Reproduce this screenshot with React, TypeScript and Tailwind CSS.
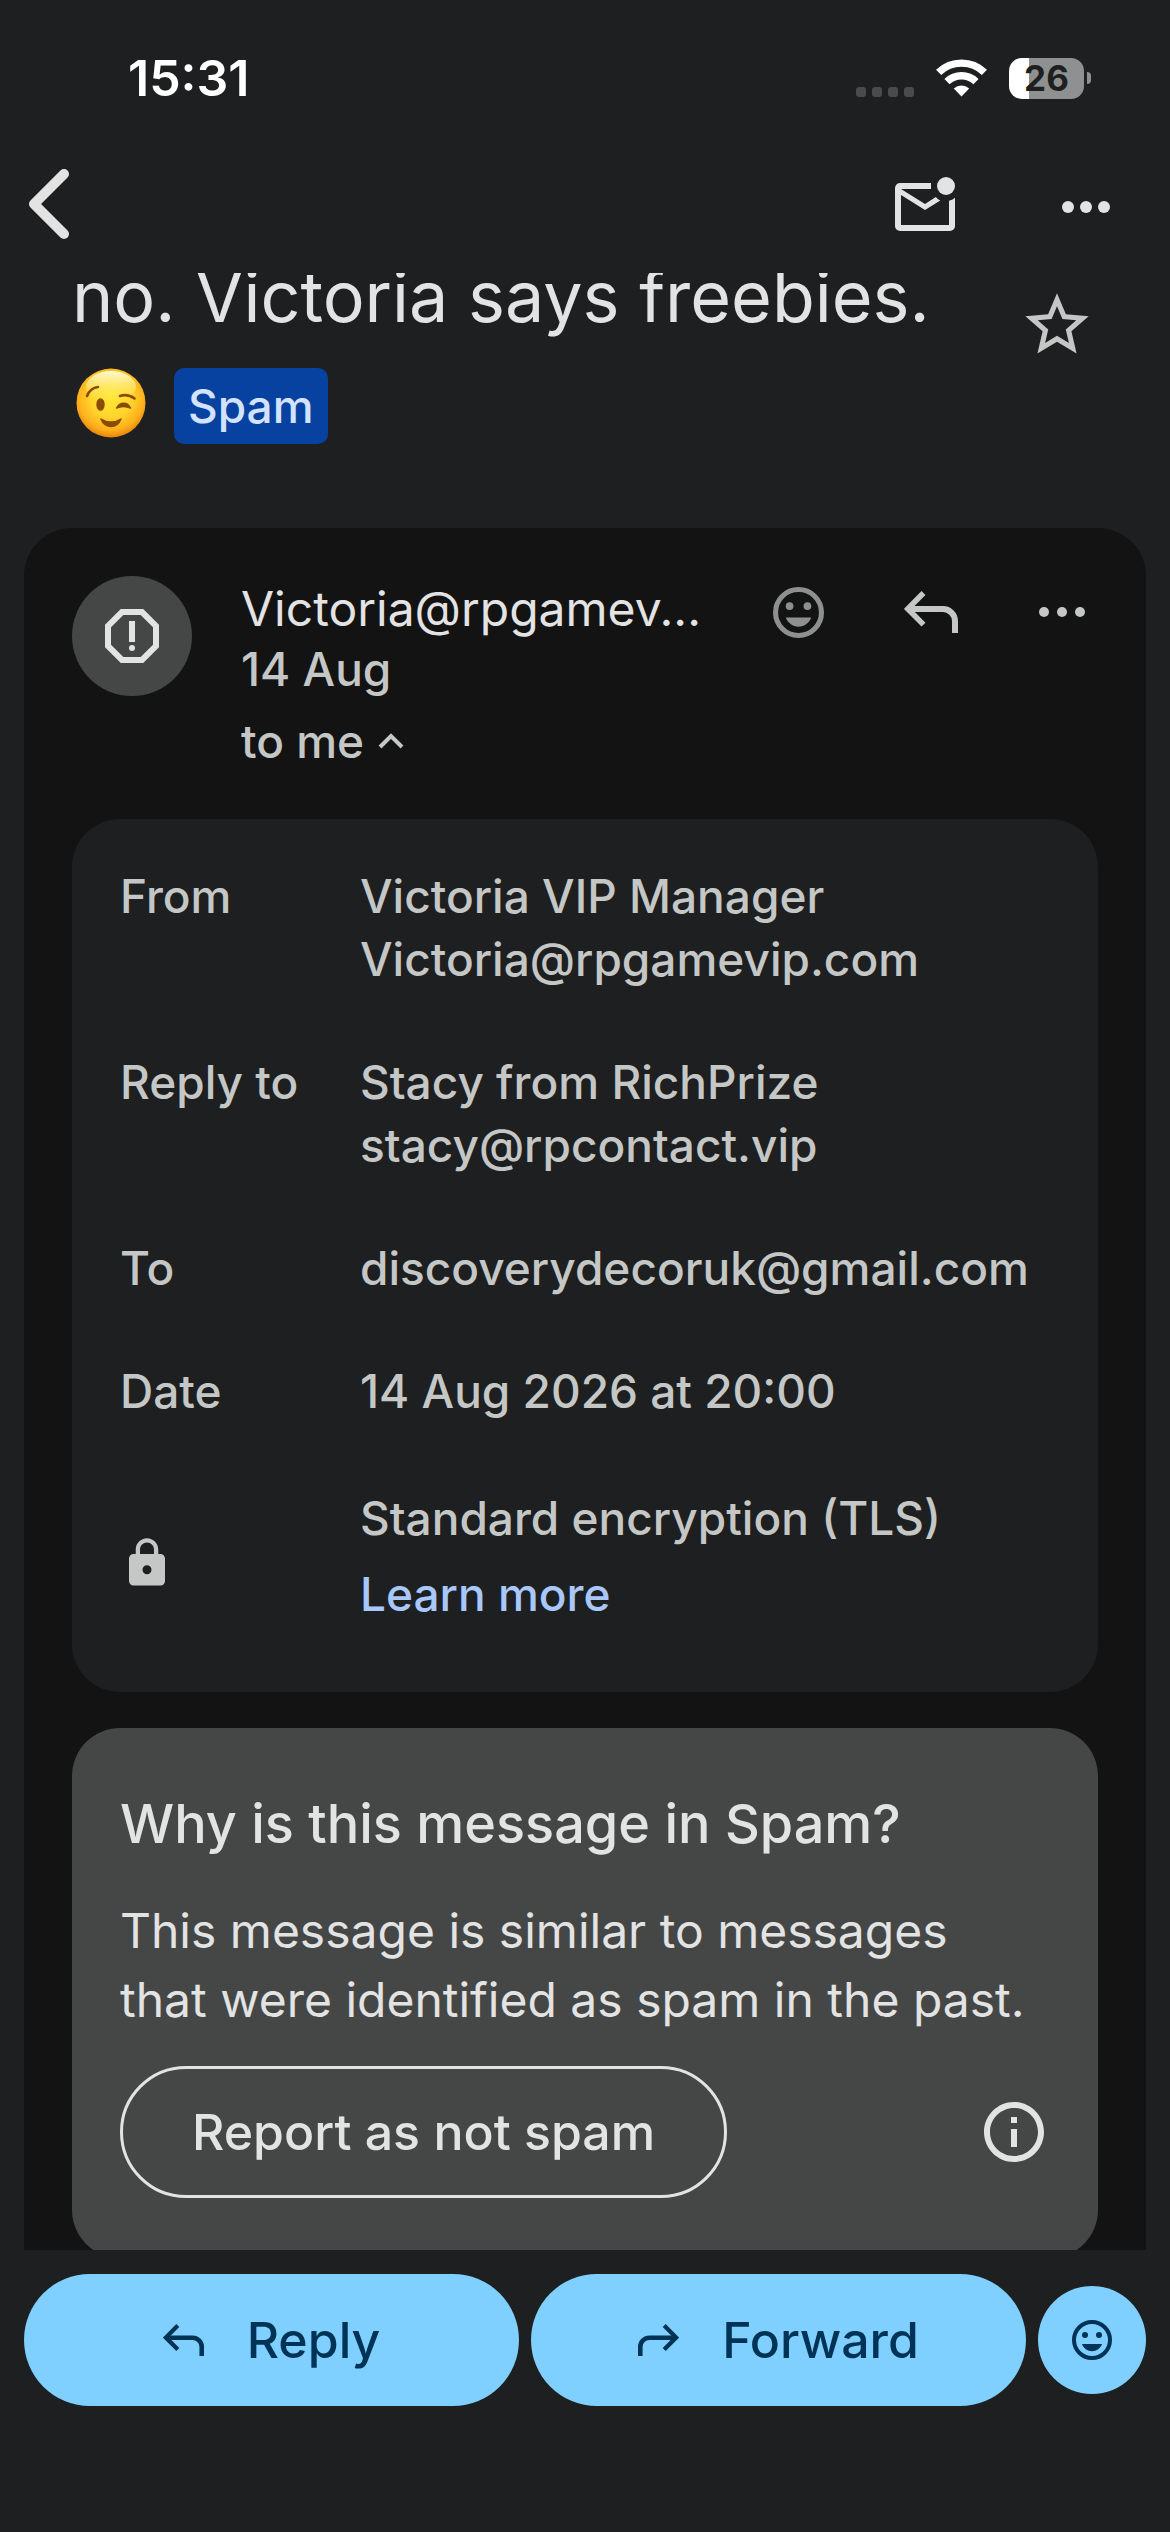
import { useState } from "react";
import type { ReactNode } from "react";
import { MdLock, MdOutlineInfo, MdOutlineReport, MdStarBorder } from "react-icons/md";

const details = [
  { label: "From", lines: ["Victoria VIP Manager", "Victoria@rpgamevip.com"] },
  { label: "Reply to", lines: ["Stacy from RichPrize", "stacy@rpcontact.vip"] },
  { label: "To", lines: ["discoverydecoruk@gmail.com"] },
  { label: "Date", lines: ["14 Aug 2026 at 20:00"] },
];

function WifiIcon() {
  return (
    <svg viewBox="0 0 51 38" className="h-[38px] w-[51px]" fill="none" stroke="#fff">
      <path d="M2.6 13.4a33 33 0 0 1 45.8 0" strokeWidth="7.4" />
      <path d="M11 22.6a21 21 0 0 1 29 0" strokeWidth="7.4" />
      <path d="M17.8 29.4a11.4 11.4 0 0 1 15.4 0L25.5 37.4z" fill="#fff" stroke="none" />
    </svg>
  );
}

function BackIcon() {
  return (
    <svg viewBox="0 0 42 70" className="h-[70px] w-[42px]" fill="none" stroke="#e3e3e3">
      <path
        d="M36 5 6 35l30 30"
        strokeWidth="10"
        strokeLinecap="round"
        strokeLinejoin="round"
      />
    </svg>
  );
}

function UnreadIcon() {
  return (
    <svg viewBox="0 0 24 24" className="size-[72px]" fill="#e3e3e3">
      <path d="M14 4H3.7A1.7 1.7 0 0 0 2 5.7v12.6A1.7 1.7 0 0 0 3.7 20h16.6a1.7 1.7 0 0 0 1.7-1.7V8.9c-.6.5-1.3.85-2 1V18H4V8l8 5 5.1-3.2c-.6-.3-1.1-.65-1.5-1.15L12 11 4 6h10z" />
      <circle cx="19" cy="5" r="3" />
    </svg>
  );
}

function MoreIcon({ radius, className }: { radius: number; className: string }) {
  return (
    <svg viewBox="0 0 48 12" className={className} fill="currentColor">
      <circle cx="6" cy="6" r={radius} />
      <circle cx="24" cy="6" r={radius} />
      <circle cx="42" cy="6" r={radius} />
    </svg>
  );
}

function SmileIcon({ className }: { className: string }) {
  return (
    <svg viewBox="0 0 20 20" className={className} fill="currentColor">
      <circle cx="10" cy="10" r="9" fill="none" stroke="currentColor" strokeWidth="2" />
      <circle cx="6.5" cy="7.5" r="1.5" />
      <circle cx="13.5" cy="7.5" r="1.5" />
      <path d="M5 12h10c-.8 2.1-2.7 3.6-5 3.6S5.8 14.1 5 12z" />
    </svg>
  );
}

function ReplyIcon({ className }: { className: string }) {
  return (
    <svg viewBox="0 0 54 42" className={className} fill="none" stroke="currentColor">
      <path d="M19.5 2 3.8 17.8l15.7 15.8" strokeWidth="5.6" />
      <path d="M5 18h34a12 12 0 0 1 12 12v12" strokeWidth="6" />
    </svg>
  );
}

function WinkEmoji() {
  return (
    <svg viewBox="0 0 70 70" className="size-[70px]" role="img" aria-label="Winking face">
      <defs>
        <radialGradient id="face" cx="50%" cy="42%" r="58%">
          <stop offset="0" stopColor="#ffe733" />
          <stop offset="0.5" stopColor="#ffd52c" />
          <stop offset="0.82" stopColor="#fdb01c" />
          <stop offset="1" stopColor="#e8830a" />
        </radialGradient>
        <linearGradient id="shine" x1="0" y1="0" x2="0" y2="1">
          <stop offset="0" stopColor="#fffce0" stopOpacity="0.95" />
          <stop offset="1" stopColor="#ffee55" stopOpacity="0" />
        </linearGradient>
      </defs>
      <circle cx="35" cy="35" r="34.5" fill="url(#face)" />
      <ellipse cx="35" cy="19" rx="25" ry="16" fill="url(#shine)" />
      <g fill="none" stroke="#8a4b06" strokeWidth="2.6" strokeLinecap="round">
        <path d="M11 28c2-5 6-8.500 11-9" />
        <path d="M44 28c5-1.600 10-.8 14.500 2.500" />
      </g>
      <g fill="#8a4b06">
        <ellipse cx="24.5" cy="36.5" rx="4.2" ry="6.3" />
        <g stroke="#8a4b06" strokeWidth="1.5" strokeLinejoin="round">
          <path d="M40.500 40c3.500-6.500 11-6.500 14 0-4-1.800-10-1.800-14 0z" />
          <path d="M25 51c6 4 14 4 20 0-2 5-6 7.500-10 7.500S27 56 25 51z" />
        </g>
      </g>
    </svg>
  );
}

function StatusBar() {
  return (
    <div className="flex h-[140px] items-center justify-between pt-4 pr-[79px] pl-[128px] text-white">
      <span className="text-[50px] font-semibold">15:31</span>
      <div className="flex items-center">
        <div className="mt-[27px] mr-[22px] flex gap-[6px]">
          {[0, 1, 2, 3].map((dot) => (
            <span key={dot} className="size-[10px] rounded-[3px] bg-[#4a4b4c]" />
          ))}
        </div>
        <WifiIcon />
        <div className="ml-[22px] flex items-center gap-[3px]">
          <div className="flex h-[41px] w-[75px] items-center justify-center rounded-[13px] bg-linear-to-r from-white from-27% to-[#8f9190] to-27% text-[35px] leading-none font-bold text-[#1e1f20]">
            26
          </div>
          <span className="h-[12px] w-[4px] rounded-r-full bg-[#8f9190]" />
        </div>
      </div>
    </div>
  );
}

function PillButton({ icon, children }: { icon: ReactNode; children: ReactNode }) {
  return (
    <button className="flex h-[132px] flex-1 items-center justify-center gap-[43px] rounded-full bg-[#7fcfff] text-[50px] font-medium text-[#003355]">
      {icon}
      {children}
    </button>
  );
}

export default function App() {
  const [starred, setStarred] = useState(false);
  const [showDetails, setShowDetails] = useState(true);

  return (
    <div className="flex h-screen flex-col bg-[#1e1f20] font-['Inter',sans-serif] text-[#e3e3e3]">
      {/* Header */}
      <header>
        <StatusBar />
        <div className="flex h-[133px] items-center justify-between pr-[60px] pl-[28px]">
          <button aria-label="Back" className="pb-1.5">
            <BackIcon />
          </button>
          <div className="flex items-center gap-[101px]">
            <button aria-label="Mark as unread">
              <UnreadIcon />
            </button>
            <button aria-label="More options">
              <MoreIcon radius={6} className="h-[12px] w-[48px]" />
            </button>
          </div>
        </div>
      </header>

      <main className="min-h-0 flex-1 overflow-hidden">
        {/* Subject, scrolled partly under the header */}
        <div className="-mt-6 flex items-start justify-between pr-[75px] pb-[84px] pl-[72px]">
          <div>
            <h1 className="text-[70px] leading-[96px]">no. Victoria says freebies.</h1>
            <div className="flex items-start gap-7 pt-[23px] pl-1">
              <WinkEmoji />
              <span className="flex h-[76px] items-center rounded-[10px] bg-[#0842a0] px-[14px] text-[46px] font-medium text-[#d3e3fd]">
                Spam
              </span>
            </div>
          </div>
          <button
            aria-label="Star"
            aria-pressed={starred}
            onClick={() => setStarred(!starred)}
            className="mt-[38px] text-[#c4c7c5]"
          >
            <MdStarBorder size={76} />
          </button>
        </div>

        <article className="mx-6 rounded-t-[48px] bg-[#131314] p-12">
          {/* Sender */}
          <div className="flex items-start pb-12 text-[#c4c7c5]">
            <div className="flex size-[120px] shrink-0 items-center justify-center rounded-full bg-[#444746] text-[#e3e3e3]">
              <MdOutlineReport size={72} />
            </div>
            <div className="ml-[49px] flex-1 pt-[3px] leading-[60px]">
              <p className="text-[48px] text-[#e3e3e3]">Victoria@rpgamev...</p>
              <p className="text-[46px] font-medium">14 Aug</p>
              <button
                onClick={() => setShowDetails(!showDetails)}
                aria-expanded={showDetails}
                className="mt-3 flex items-center gap-3.5 text-[46px] font-medium"
              >
                to me
                <svg viewBox="0 0 26 16" className="h-[16px] w-[26px]" fill="none" stroke="currentColor">
                  <path d="M2 14 13 3l11 11" strokeWidth="4" />
                </svg>
              </button>
            </div>
            <div className="flex h-[72px] items-center gap-[80px] pr-[12px]">
              <button aria-label="Add reaction" className="text-[#8e8f8f]">
                <SmileIcon className="size-[51px]" />
              </button>
              <button aria-label="Reply">
                <ReplyIcon className="h-[42px] w-[54px]" />
              </button>
              <button aria-label="More message options">
                <MoreIcon radius={5} className="h-[12px] w-[48px]" />
              </button>
            </div>
          </div>

          {/* Details */}
          {showDetails && (
            <dl className="flex flex-col gap-[60px] rounded-[48px] bg-[#1e1f20] px-12 pt-[46px] pb-[66px] text-[46px] leading-[63px] font-medium text-[#c4c7c5]">
              {details.map((row) => (
                <div key={row.label} className="flex">
                  <dt className="w-[240px] shrink-0">{row.label}</dt>
                  <dd>
                    {row.lines.map((line) => (
                      <p key={line}>{line}</p>
                    ))}
                  </dd>
                </div>
              ))}
              <div className="flex items-center pt-1">
                <dt className="w-[240px] shrink-0 pt-3" aria-label="Security">
                  <MdLock size={54} />
                </dt>
                <dd className="flex flex-col gap-[13px]">
                  <p>Standard encryption (TLS)</p>
                  <a href="#encryption" className="text-[#a8c7fa]">
                    Learn more
                  </a>
                </dd>
              </div>
            </dl>
          )}

          {/* Spam notice */}
          <section className="mt-9 rounded-[48px] bg-[#444746] px-12 py-[60px]">
            <h2 className="text-[54px] leading-[72px] font-medium">
              Why is this message in Spam?
            </h2>
            <p className="mt-9 pr-6 text-[48px] leading-[69px]">
              This message is similar to messages that were identified as spam in the past.
            </p>
            <div className="mt-8 flex items-center justify-between">
              <button className="h-[132px] rounded-full border-3 border-[#e3e3e3] px-[69px] text-[50px] font-medium">
                Report as not spam
              </button>
              <button aria-label="More information">
                <MdOutlineInfo size={72} />
              </button>
            </div>
          </section>
        </article>
      </main>

      <footer className="flex items-center gap-3 px-6 pt-6 pb-[126px]">
        <PillButton icon={<ReplyIcon className="h-[32px] w-[41px]" />}>Reply</PillButton>
        <PillButton icon={<ReplyIcon className="h-[32px] w-[41px] -scale-x-100" />}>
          Forward
        </PillButton>
        <button
          aria-label="Add emoji reaction"
          className="flex size-[108px] items-center justify-center rounded-full bg-[#7fcfff] text-[#003355]"
        >
          <SmileIcon className="size-[40px]" />
        </button>
      </footer>
    </div>
  );
}
